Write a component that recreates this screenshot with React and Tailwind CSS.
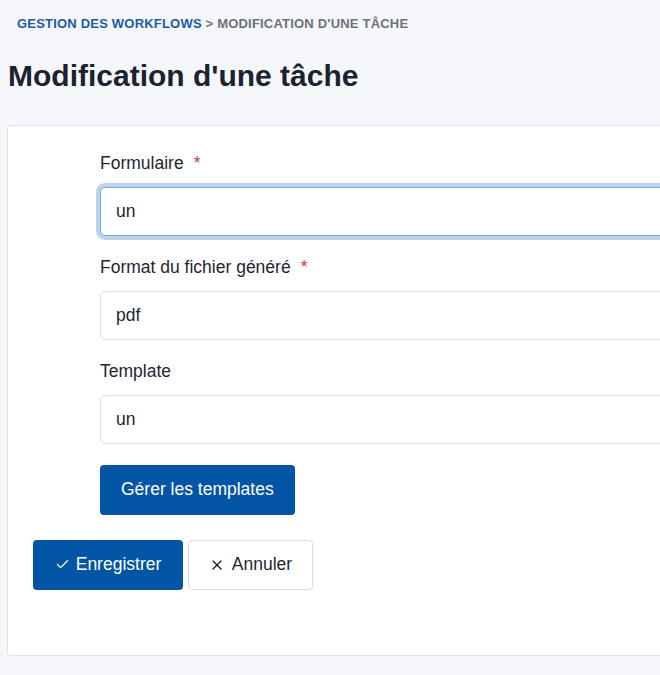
import { Check, X } from 'lucide-react';

const fields = [
  { label: 'Formulaire', value: 'un', required: true, focused: true },
  { label: 'Format du fichier généré', value: 'pdf', required: true },
  { label: 'Template', value: 'un' },
];

function Field({ label, value, required, focused }) {
  return (
    <div className="flex flex-col">
      <label className="h-[24px] text-[17.5px] leading-[24px] text-[#1f2533] mb-[12px] flex items-center">
        {label}
        {required && <span className="ml-[10px] text-[#d83a3a]">*</span>}
      </label>
      <input
        readOnly
        value={value}
        className={`h-[49px] w-[700px] rounded-[5px] bg-white px-[15px] text-[17.5px] text-[#1f2533] outline-none border ${
          focused
            ? 'border-[#7ba6d4] ring-[4px] ring-[#bdd3ea]'
            : 'border-[#dcdee3]'
        }`}
      />
    </div>
  );
}

export default function App() {
  return (
    <div className="min-h-[675px] bg-[#f6f7fb] font-['Liberation_Sans',Arial,sans-serif] overflow-hidden">
      <div className="pt-[14px] pl-[17px] text-[13px] font-bold tracking-[0.2px] uppercase">
        <span className="text-[#1a5ca8]">Gestion des workflows</span>
        <span className="text-[#6c717c]"> &gt; Modification d'une tâche</span>
      </div>

      <h1 className="mt-[24px] pl-[8px] text-[30px] font-bold text-[#1b2230] leading-[36px]">
        Modification d'une tâche
      </h1>

      <div className="mt-[31px] ml-[7px] w-[720px] h-[531px] bg-white border border-[#dfe1e6] rounded-[4px] pt-[25px]">
        <div className="pl-[92px] flex flex-col gap-[19px]">
          {fields.map((f) => (
            <Field key={f.label} {...f} />
          ))}
          <div className="pt-[2px]">
            <button className="h-[50px] px-[21px] rounded-[4px] bg-[#0255a5] text-white text-[17.5px]">
              Gérer les templates
            </button>
          </div>
        </div>

        <div className="mt-[25px] pl-[25px] flex gap-[5px]">
          <button className="h-[50px] w-[150px] rounded-[4px] bg-[#0255a5] text-white text-[17.5px] flex items-center justify-center gap-[6px]">
            <Check size={15} strokeWidth={2} />
            Enregistrer
          </button>
          <button className="h-[50px] w-[125px] rounded-[4px] bg-white border border-[#dcdde3] text-[#1f2533] text-[17.5px] flex items-center justify-center gap-[7px]">
            <X size={16} strokeWidth={2} />
            Annuler
          </button>
        </div>
      </div>
    </div>
  );
}
